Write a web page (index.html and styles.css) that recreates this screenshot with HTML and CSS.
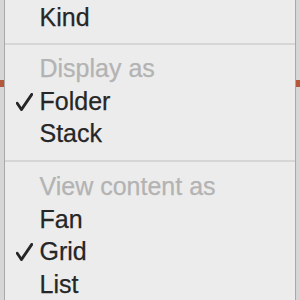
FILE: index.html
```html
<!DOCTYPE html>
<html>
<head>
    <title>Menu</title>
    <link rel="stylesheet" href="styles.css">
</head>
<body>
    <!-- Menu de visualização -->
    <div class="menu">
        <div class="item">Kind</div>
        <div class="separator"></div>
        <div class="item disabled">Display as</div>
        <div class="item checked">
            <svg class="check" width="17" height="18" viewBox="0 0 17 18"><path d="M1.2 10.2 L5.4 16.6 L15.8 1.4" /></svg>Folder
        </div>
        <div class="item">Stack</div>
        <div class="separator second"></div>
        <div class="item disabled">View content as</div>
        <div class="item">Fan</div>
        <div class="item checked">
            <svg class="check" width="17" height="18" viewBox="0 0 17 18"><path d="M1.2 10.2 L5.4 16.6 L15.8 1.4" /></svg>Grid
        </div>
        <div class="item">List</div>
    </div>
</body>
</html>
```

FILE: styles.css
```css
html {
    background: linear-gradient(to bottom, #d6d6d6 0, #d6d6d6 80px, #b4573a 80px, #b4573a 87px, #d6d6d6 87px);
}
body {
    margin: 0;
    padding: 0;
    height: 300px;
    overflow: hidden;
    font-family: "Liberation Sans", Arial, sans-serif;
    font-size: 25px;
    color: #262626;
}
.menu {
    margin-left: 4px;
    width: 290px;
    height: 300px;
    background-color: #ececec;
    border-left: 1px solid #a9a9a9;
    border-right: 1px solid #a9a9a9;
    padding-top: 1px;
}
.item {
    line-height: 32.5px;
    height: 32.5px;
    padding-left: 34.5px;
    white-space: nowrap;
    -webkit-text-stroke: 0.25px currentColor;
}
.item.checked {
    padding-left: 11px;
}
.item.disabled {
    color: #b3b3b3;
}
.check {
    vertical-align: -1px;
    margin-right: 6.5px;
}
.check path {
    fill: none;
    stroke: #262626;
    stroke-width: 2.8;
    stroke-linecap: round;
    stroke-linejoin: round;
}
.separator {
    height: 2px;
    background-color: #d6d6d6;
    margin: 9px 0 7.5px;
}
.separator.second {
    margin: 10px 0 8.5px;
}
```
